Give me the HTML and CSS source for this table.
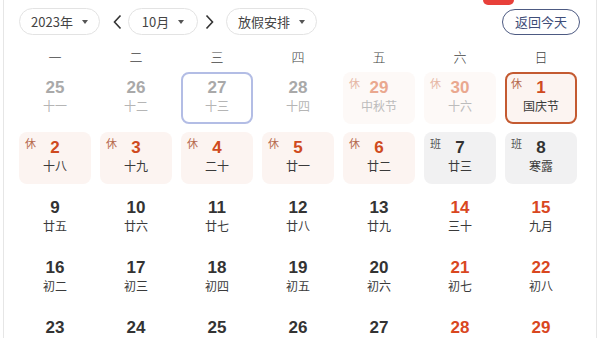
FILE: index.html
```html
<!DOCTYPE html>
<html lang="zh">
<head>
<meta charset="utf-8">
<link rel="stylesheet" href="styles.css">
</head>
<body>
<div class="frame">
  <div class="tab-mark"></div>
  <div class="toolbar">
    <div class="pill pill-year">2023年<span class="caret"></span></div>
    <svg class="chev" width="9" height="16" viewBox="0 0 9 16"><polyline points="7.5,1.5 1.5,8 7.5,14.5" fill="none" stroke="#333" stroke-width="1.6"/></svg>
    <div class="pill pill-month">10月<span class="caret"></span></div>
    <svg class="chev chev-r" width="9" height="16" viewBox="0 0 9 16"><polyline points="1.5,1.5 7.5,8 1.5,14.5" fill="none" stroke="#333" stroke-width="1.6"/></svg>
    <div class="pill pill-plan">放假安排<span class="caret"></span></div>
    <div class="today-btn">返回今天</div>
  </div>

  <div class="weekdays">
    <div>一</div><div>二</div><div>三</div><div>四</div><div>五</div><div>六</div><div>日</div>
  </div>

  <div class="grid">
    <div class="cell out"><div class="num">25</div><div class="lunar">十一</div></div>
    <div class="cell out"><div class="num">26</div><div class="lunar">十二</div></div>
    <div class="cell out hover"><div class="num">27</div><div class="lunar">十三</div></div>
    <div class="cell out"><div class="num">28</div><div class="lunar">十四</div></div>
    <div class="cell out rest"><span class="tag">休</span><div class="num">29</div><div class="lunar">中秋节</div></div>
    <div class="cell out rest"><span class="tag">休</span><div class="num">30</div><div class="lunar">十六</div></div>
    <div class="cell rest today"><span class="tag">休</span><div class="num">1</div><div class="lunar">国庆节</div></div>

    <div class="cell rest"><span class="tag">休</span><div class="num">2</div><div class="lunar">十八</div></div>
    <div class="cell rest"><span class="tag">休</span><div class="num">3</div><div class="lunar">十九</div></div>
    <div class="cell rest"><span class="tag">休</span><div class="num">4</div><div class="lunar">二十</div></div>
    <div class="cell rest"><span class="tag">休</span><div class="num">5</div><div class="lunar">廿一</div></div>
    <div class="cell rest"><span class="tag">休</span><div class="num">6</div><div class="lunar">廿二</div></div>
    <div class="cell work"><span class="tag">班</span><div class="num">7</div><div class="lunar">廿三</div></div>
    <div class="cell work"><span class="tag">班</span><div class="num">8</div><div class="lunar">寒露</div></div>

    <div class="cell"><div class="num">9</div><div class="lunar">廿五</div></div>
    <div class="cell"><div class="num">10</div><div class="lunar">廿六</div></div>
    <div class="cell"><div class="num">11</div><div class="lunar">廿七</div></div>
    <div class="cell"><div class="num">12</div><div class="lunar">廿八</div></div>
    <div class="cell"><div class="num">13</div><div class="lunar">廿九</div></div>
    <div class="cell weekend"><div class="num">14</div><div class="lunar">三十</div></div>
    <div class="cell weekend"><div class="num">15</div><div class="lunar">九月</div></div>

    <div class="cell"><div class="num">16</div><div class="lunar">初二</div></div>
    <div class="cell"><div class="num">17</div><div class="lunar">初三</div></div>
    <div class="cell"><div class="num">18</div><div class="lunar">初四</div></div>
    <div class="cell"><div class="num">19</div><div class="lunar">初五</div></div>
    <div class="cell"><div class="num">20</div><div class="lunar">初六</div></div>
    <div class="cell weekend"><div class="num">21</div><div class="lunar">初七</div></div>
    <div class="cell weekend"><div class="num">22</div><div class="lunar">初八</div></div>

    <div class="cell"><div class="num">23</div><div class="lunar">初九</div></div>
    <div class="cell"><div class="num">24</div><div class="lunar">初十</div></div>
    <div class="cell"><div class="num">25</div><div class="lunar">十一</div></div>
    <div class="cell"><div class="num">26</div><div class="lunar">十二</div></div>
    <div class="cell"><div class="num">27</div><div class="lunar">十三</div></div>
    <div class="cell weekend"><div class="num">28</div><div class="lunar">十四</div></div>
    <div class="cell weekend"><div class="num">29</div><div class="lunar">十五</div></div>
  </div>
</div>
</body>
</html>
```

FILE: styles.css
```css
html, body {
  margin: 0;
  padding: 0;
  background: #fff;
  overflow: hidden;
}
body {
  width: 600px;
  height: 338px;
  font-family: "Liberation Sans", "Noto Sans CJK SC", sans-serif;
  color: #333;
}
.frame {
  position: relative;
  margin: 0 3px;
  height: 338px;
  overflow: hidden;
  border-left: 1px solid #e6e6e6;
  border-right: 1px solid #e6e6e6;
  padding: 8px 15px 0 15px;
  box-sizing: border-box;
}
.tab-mark {
  position: absolute;
  left: 479px;
  top: 0;
  width: 31px;
  height: 5px;
  background: #e8403a;
  border-radius: 0 0 8px 8px;
}
.toolbar {
  display: flex;
  align-items: center;
  height: 27px;
}
.pill {
  box-sizing: border-box;
  height: 27px;
  border: 1px solid #e3e3e3;
  border-radius: 14px;
  display: flex;
  align-items: center;
  justify-content: center;
  font-size: 13px;
  color: #444;
  font-family: "Noto Sans CJK SC", "Liberation Sans", sans-serif;
}
.caret {
  width: 0;
  height: 0;
  margin-left: 9px;
  margin-top: 1px;
  border-left: 3px solid transparent;
  border-right: 3px solid transparent;
  border-top: 4px solid #555;
}
.pill-year { width: 81px; }
.pill-month { width: 70px; }
.pill-plan { width: 91px; }
.chev { margin: 0 6px 0 13px; }
.chev-r { margin: 0 12px 0 7px; }
.today-btn {
  margin-left: auto;
  margin-right: 1px;
  box-sizing: border-box;
  width: 78px;
  height: 26px;
  border: 1px solid #4d5a82;
  border-radius: 13px;
  display: flex;
  align-items: center;
  justify-content: center;
  font-size: 13px;
  color: #3e4d78;
  font-family: "Noto Sans CJK SC", sans-serif;
}
.weekdays {
  display: grid;
  grid-template-columns: repeat(7, 72px);
  column-gap: 9px;
  margin-top: 6px;
  height: 31px;
  align-items: center;
  font-family: "Noto Sans CJK SC", sans-serif;
  font-weight: 300;
  font-size: 13px;
  color: #444;
  text-align: center;
}
.grid {
  display: grid;
  grid-template-columns: repeat(7, 72px);
  grid-auto-rows: 52px;
  column-gap: 9px;
  row-gap: 8px;
}
.cell {
  position: relative;
  box-sizing: border-box;
  border-radius: 8px;
  text-align: center;
  padding-top: 6px;
}
.num {
  font-family: "Liberation Sans", sans-serif;
  font-weight: bold;
  font-size: 17px;
  line-height: 20px;
  color: #333;
}
.lunar {
  font-family: "Noto Sans CJK SC", sans-serif;
  font-size: 12px;
  line-height: 16px;
  color: #3a3a3a;
}
.tag {
  position: absolute;
  left: 6px;
  top: 4px;
  font-family: "Noto Sans CJK SC", sans-serif;
  font-size: 11px;
  line-height: 14px;
}
.rest { background: #fcf4f1; }
.rest .num { color: #cf4a20; }
.rest .tag { color: #b66a4e; }
.work { background: #f1f1f2; }
.work .tag { color: #555; }
.weekend .num { color: #d9471f; }
.out .num { color: #a9a9a9; }
.out .lunar { color: #b5b5b5; }
.out.rest { background: #fdf9f7; }
.out.rest .num { color: #eaa88f; }
.out.rest .tag { color: #e6b7a5; }
.out.rest .lunar { color: #bcbcbc; }
.hover {
  border: 2px solid #b3bde5;
  padding-top: 4px;
}
.today {
  border: 2px solid #c45a31;
  padding-top: 4px;
}
.today .tag { left: 4px; top: 2px; }
```
